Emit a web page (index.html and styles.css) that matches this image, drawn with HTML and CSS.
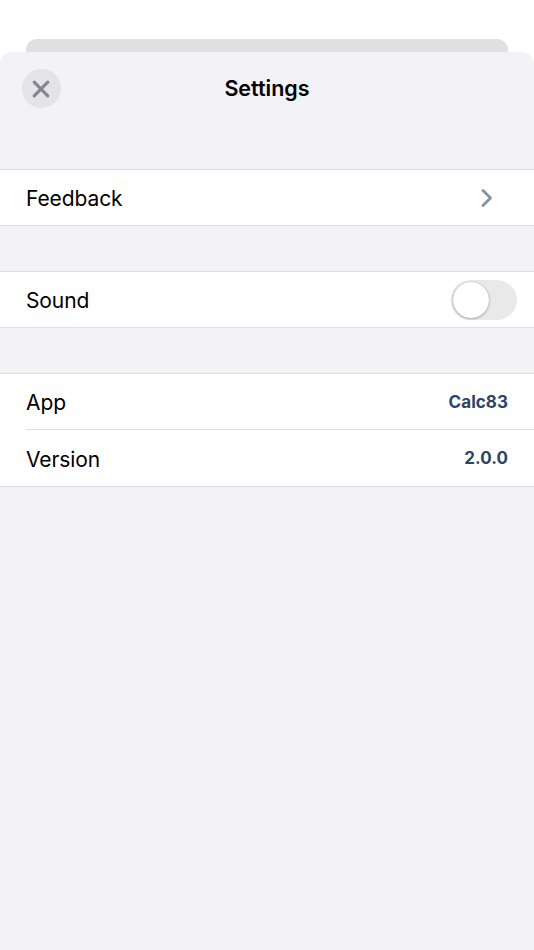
FILE: index.html
```html
<!DOCTYPE html>
<html lang="en">
<head>
<meta charset="utf-8">
<title>Settings</title>
<link rel="stylesheet" href="styles.css">
</head>
<body>
<div class="page">
  <div class="behind"></div>
  <main class="sheet">
    <header class="header">
      <button class="close" aria-label="Close">
        <svg class="close-icon" width="18" height="18" viewBox="0 0 18 18"><path d="M2.2 2.2 15.8 15.8M15.8 2.2 2.2 15.8" fill="none" stroke="#85858b" stroke-width="3.1" stroke-linecap="round"/></svg>
      </button>
      <h1 class="title">Settings</h1>
    </header>
    <section class="group first">
      <div class="row">
        <span class="label">Feedback</span>
        <svg class="chevron" width="12" height="18" viewBox="0 0 12 18"><path d="M2 1.5 9.5 9 2 16.5" fill="none" stroke="#8492a3" stroke-width="2.8" stroke-linecap="round" stroke-linejoin="round"/></svg>
      </div>
    </section>
    <section class="group">
      <div class="row">
        <span class="label">Sound</span>
        <div class="switch"><div class="knob"></div></div>
      </div>
    </section>
    <section class="group">
      <div class="row">
        <span class="label">App</span>
        <span class="value">Calc83</span>
      </div>
      <div class="rule"></div>
      <div class="row tall">
        <span class="label">Version</span>
        <span class="value">2.0.0</span>
      </div>
    </section>
  </main>
</div>
</body>
</html>
```
FILE: styles.css
```css
* { box-sizing: border-box; }
html, body { margin: 0; height: 100%; background: #fff; }
body { font-family: Inter, "Liberation Sans", sans-serif; color: #000; }
.page { height: 950px; display: flex; flex-direction: column; overflow: hidden; }
.behind { flex: none; height: 20px; margin: 39px 26px -7px; background: #e0e0e0; border-radius: 11px 11px 0 0; }
.sheet { position: relative; flex: 1; background: #f2f2f7; border-radius: 12px 12px 0 0; }
.header { position: relative; height: 117px; padding: 17px 0 0 22px; }
.close { display: flex; align-items: center; justify-content: center; width: 38.5px; height: 39px; padding: 0; border: 0; border-radius: 50%; background: #e3e3e8; }
.close-icon { margin-top: 1px; }
.title { position: absolute; top: 21px; left: 0; right: 0; margin: 0; text-align: center; font-size: 21.5px; line-height: 30px; font-weight: 600; }
.group { background: #fff; border-top: 1px solid #dedee3; border-bottom: 1px solid #dedee3; margin-bottom: 45px; }
.row { height: 55px; padding: 0 26px; display: flex; align-items: center; justify-content: space-between; }
.label { margin-top: 2px; font-size: 21px; line-height: 30px; letter-spacing: -.1px; }
.value { font-size: 17px; font-weight: 700; color: #2f4464; letter-spacing: .05px; }
.rule { height: 1px; margin-left: 26px; background: #dedee3; }
.tall { height: 56px; }
.tall .label { margin-top: 3px; }
.chevron { margin-right: 15px; }
.switch { width: 66px; height: 40px; margin-right: -9px; padding: 2px; border-radius: 20px; background: #e9e9ea; }
.knob { width: 36px; height: 36px; border-radius: 50%; background: #fff; box-shadow: 0 1px 3px rgba(0,0,0,.25), 0 0 1px rgba(0,0,0,.3); }
```
